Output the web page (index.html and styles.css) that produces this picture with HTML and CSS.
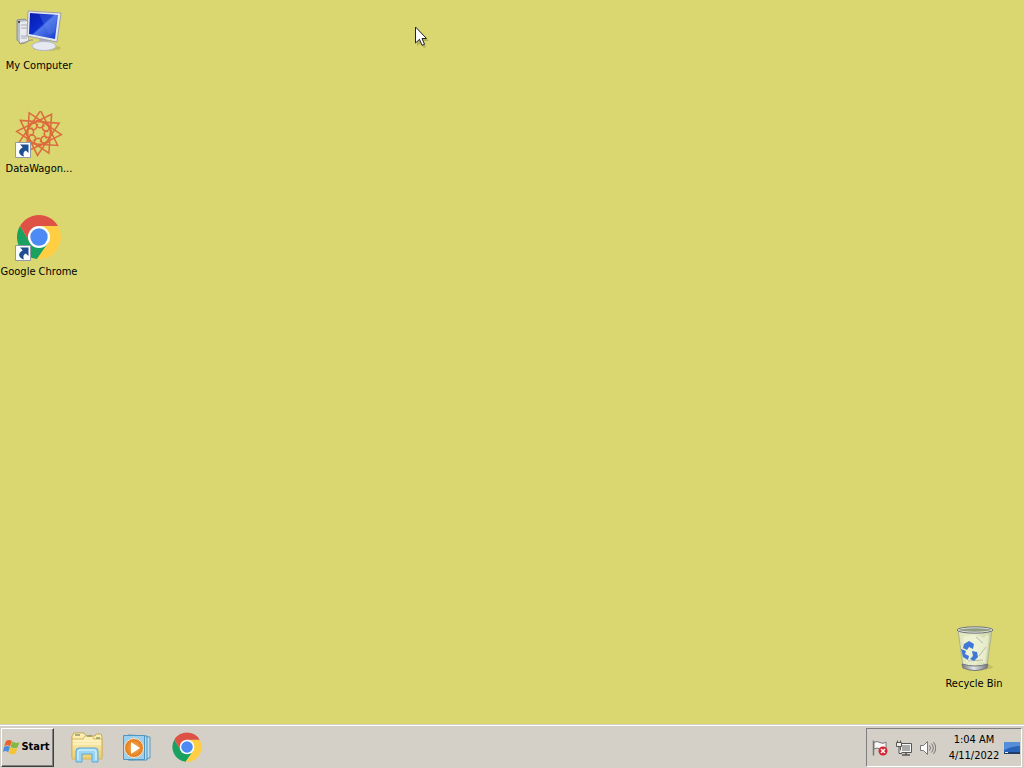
FILE: index.html
```html
<!DOCTYPE html>
<html lang="en">
<head>
<meta charset="utf-8">
<title>Desktop</title>
<link rel="stylesheet" href="styles.css">
</head>
<body>
<svg class="defs" aria-hidden="true">
  <defs>
    <linearGradient id="screen" x1="0" y1="0" x2="1" y2="1"><stop offset="0" stop-color="#0618a8"/><stop offset=".45" stop-color="#0c2ed0"/><stop offset=".5" stop-color="#4f78e8"/><stop offset="1" stop-color="#1238cf"/></linearGradient>
    <linearGradient id="metal" x1="0" y1="0" x2="1" y2="0"><stop offset="0" stop-color="#77797d"/><stop offset=".45" stop-color="#e4e6e8"/><stop offset="1" stop-color="#6e7378"/></linearGradient>
    <linearGradient id="folder" x1="0" y1="0" x2="0" y2="1"><stop offset="0" stop-color="#fff3bd"/><stop offset="1" stop-color="#eccd6c"/></linearGradient>
    <radialGradient id="orange"><stop offset="0" stop-color="#ffb25c"/><stop offset="1" stop-color="#e07818"/></radialGradient>
    <linearGradient id="glass" x1="0" y1="0" x2="1" y2="0"><stop offset="0" stop-color="#dfe5be"/><stop offset=".5" stop-color="#e8edc8"/><stop offset="1" stop-color="#c7cda0"/></linearGradient>
    <symbol id="chrome" viewBox="0 0 48 48">
      <path fill="#1aa15f" d="M5 13A22 22 0 0 0 22 46L33.5 29.5 24 34 14.5 28.5z"/>
      <path fill="#ffce43" d="M43 13A22 22 0 0 1 22 46L33.5 29.5V18.5L24 13z"/>
      <path fill="#de5246" d="M5 13 14.5 28.5 24 13H43A22 22 0 0 0 5 13z"/>
      <circle cx="24" cy="24" r="11" fill="#fff"/><circle cx="24" cy="24" r="8.7" fill="#4c8bf5"/>
    </symbol>
    <symbol id="shortcut" viewBox="0 0 16 16">
      <path d="M.5.5h15v15H.5z" fill="#fff" stroke="#8f9aa5"/>
      <path d="M5 2.5h8.500V11l-2.700-2.600C8.500 9.500 7.800 11.500 9 14.500 3 12.500 2.500 8.500 7.700 5.200z" fill="#1d4f91"/>
    </symbol>
    <path id="triangle" d="M0-22.500 19.500 11.200H-19.500z"/>
    <path id="curl" d="M-3-12C2-15 7-9 3-6 0-4-4-7-1-9"/>
  </defs>
</svg>
<main class="desktop">
  <nav class="icons" aria-label="Desktop icons">
    <button class="shortcut" type="button">
      <svg class="icon" viewBox="0 0 48 48" aria-hidden="true">
        <ellipse cx="32" cy="40" rx="14" ry="3" fill="#b7b35c" opacity=".7"/>
        <path d="M2 12 10 11 13 14V33L5 35 2 32z" fill="#b9bdc6" stroke="#8d9099"/>
        <path d="M5 14 13 13V33L5 35z" fill="#e8eaee"/>
        <path d="M6 17h6M6 20h6M6 28h6M6 30h6" stroke="#a7abb2"/><circle cx="4" cy="14" r="1" fill="#262a32"/>
        <path d="M4 35c5 3 9-4 14-3" stroke="#8a8c96" fill="none"/>
        <path d="M25 29 33 30 35 38H23z" fill="#a9adb8"/>
        <ellipse cx="29" cy="38" rx="12" ry="4.500" fill="#e7e9f2" stroke="#b5b8c5"/>
        <path d="M13 3 46 5 42 34 12 28z" fill="#e5e7f0" stroke="#9da1ae"/>
        <path d="M15 5 43 7 40 31 14 26z" fill="url(#screen)"/>
        <path d="M24 6 42 7 40 24 34 27z" fill="#6688ec" opacity=".3"/>
      </svg>
      <span class="label">My Computer</span>
    </button>
    <button class="shortcut" type="button">
      <svg class="icon" viewBox="0 0 48 48" aria-hidden="true">
        <g transform="translate(24 22)" fill="none" stroke="#dc6b3e" stroke-width="1.500">
          <g transform="rotate(4)"><use href="#triangle"/><use href="#triangle" transform="rotate(30)"/><use href="#triangle" transform="rotate(60)"/><use href="#triangle" transform="rotate(90)"/></g>
          <use href="#curl"/><use href="#curl" transform="rotate(45)"/><use href="#curl" transform="rotate(90)"/><use href="#curl" transform="rotate(135)"/><use href="#curl" transform="rotate(180)"/><use href="#curl" transform="rotate(225)"/><use href="#curl" transform="rotate(270)"/><use href="#curl" transform="rotate(315)"/>
        </g>
        <use href="#shortcut" x="0" y="31" width="16" height="16"/>
      </svg>
      <span class="label">DataWagon...</span>
    </button>
    <button class="shortcut" type="button">
      <svg class="icon" viewBox="0 0 48 48" aria-hidden="true">
        <use href="#chrome" x="0" y="-1" width="48" height="48"/>
        <use href="#shortcut" x="0" y="31" width="16" height="16"/>
      </svg>
      <span class="label">Google Chrome</span>
    </button>
  </nav>
  <button class="shortcut bin" type="button">
    <svg class="icon" viewBox="-1 1 48 48" aria-hidden="true">
      <ellipse cx="28" cy="42" rx="14" ry="3" fill="#b3af5c" opacity=".6"/>
      <path d="M7 5 12 41Q24 47 36 41L41 5z" fill="url(#glass)" stroke="#adb38c"/>
      <path d="M12 12 22 10 33 13 36 9 38 12 34 38 27 36 16 38z" fill="#f4f6dc" opacity=".6"/>
      <path d="m28 31 7-9M25 12l7 6M17 36l15-1" stroke="#b8bea4" fill="none"/>
      <g fill="#3f78d8"><path d="m13 19 5-3 5 3-1 5-4-2-2 3-4-2z"/><path d="m10 24 5 2-1 3 4 2-1 4-5-3z"/><path d="m21 26 5 1 1 5-4 4-4-2 3-3z"/></g>
      <path d="M11 39Q24 43 37 39L36 43Q24 48 12 43z" fill="url(#metal)" stroke="#73787b"/>
      <ellipse cx="24" cy="5" rx="17" ry="2.500" fill="#8f9c80" stroke="#dfe2df" stroke-width="1.500"/>
      <ellipse cx="24" cy="5" rx="18" ry="3.200" fill="none" stroke="#6c7276"/>
    </svg>
    <span class="label">Recycle Bin</span>
  </button>
  <svg class="pointer" viewBox="0 0 14 21" aria-hidden="true"><path d="M3 4v16l4-3 3 5 2-1-2-6h5z" fill="#8f8c43" opacity=".5"/><path d="M1.500 1v16l4-3.700 2.500 6 2.500-1L8 12.500h4.500z" fill="#fff" stroke="#222"/></svg>
</main>
<footer class="taskbar">
  <button class="start" type="button">
    <svg class="flag" viewBox="0 0 17 16" aria-hidden="true">
      <path d="M3 2Q6 0 9 2L7 7.500Q4 5 1 7.500z" fill="#e8622c"/><path d="M9.500 2.500Q13 5 16.500 3L14.500 8.500Q11 10 7.500 8z" fill="#83b941"/>
      <path d="M1 8Q4 6 7 8L5 13.500Q3 11 0 13z" fill="#4a8fd8"/><path d="M7.500 8.500Q11 10.500 14.500 9L12.500 14.500Q9 16 5.500 14z" fill="#f7c331"/>
    </svg>
    <span>Start</span>
  </button>
  <nav class="launch" aria-label="Quick launch">
    <button class="app" type="button" aria-label="File Explorer">
      <svg class="app-icon" viewBox="0 0 32 32" aria-hidden="true">
        <path d="M1 5 3 2h10l2 3h9l1-2h5l1 3v20H1z" fill="url(#folder)" stroke="#c7a955"/>
        <path d="M1 8h11l2-3h7l2 3h8v20H1z" fill="url(#folder)" stroke="#d3b662"/>
        <path d="M4 4h5M16 5h5M25 7h4" stroke="#8d9a68" stroke-width="1.500"/>
        <path d="M2 13h28M2 10h28" stroke="#fff8d5"/>
        <path d="M5 31V20q0-3 3-3h16q3 0 3 3v11h-6v-8H11v8z" fill="#9bd5f2" stroke="#5fa9d5"/>
        <path d="M7 29v-8q0-2 2-2h14q2 0 2 2v8" fill="none" stroke="#e4f8ff"/>
      </svg>
    </button>
    <button class="app" type="button" aria-label="Media Player">
      <svg class="app-icon" viewBox="0 0 32 32" aria-hidden="true">
        <path d="M10 5 29 6v21l-19 2z" fill="#c5dfec" stroke="#5599c1"/>
        <path d="M7 4 26 5v24H7z" fill="#b6dbef" stroke="#4b91bc"/>
        <path d="M2.500 4.500h21v24h-21z" fill="#9fd0eb" stroke="#4f97c2"/>
        <circle cx="13" cy="17" r="9.500" fill="url(#orange)" stroke="#fbe6ce"/>
        <path d="m10 11 9 6-9 6z" fill="#fff"/>
      </svg>
    </button>
    <button class="app" type="button" aria-label="Google Chrome">
      <svg class="app-icon" aria-hidden="true"><use href="#chrome" width="32" height="32"/></svg>
    </button>
  </nav>
  <section class="tray" aria-label="Notification area">
    <button class="tray-button" type="button" aria-label="Action Center">
      <svg class="tray-icon" viewBox="0 0 16 16" aria-hidden="true"><path d="M1.500.5v15" stroke="#777" stroke-width="1.500"/><path d="M2 2.500q3-2 6 0t6-.5v7q-3 2-6 0t-6 0z" fill="#f8f8f8" stroke="#777"/><circle cx="11" cy="11" r="4.500" fill="#d32434"/><path d="m9 9 4 4m0-4-4 4" stroke="#fff" stroke-width="1.500"/></svg>
    </button>
    <button class="tray-button" type="button" aria-label="Network">
      <svg class="tray-icon" viewBox="0 0 16 16" aria-hidden="true"><path d="M4.500 3.500h11v9h-11z" fill="#f5f5f5" stroke="#555"/><path d="M6 5h8v6H6z" fill="#aaa"/><path d="M6 15h8M10 12.500V15" stroke="#555" stroke-width="1.500"/><path d="M.5 2.500h5v4h-5zM1.500.5v2M4.500.5v2M3 7v6.500h3" fill="#eee" stroke="#555"/></svg>
    </button>
    <button class="tray-button" type="button" aria-label="Volume">
      <svg class="tray-icon" viewBox="0 0 16 16" aria-hidden="true"><path d="M.5 5.500h3l4-4v13l-4-4h-3z" fill="#fafafa" stroke="#777"/><path d="M9.500 5.500q2 2.500 0 5M11.500 3.500q3.500 4.500 0 9M13.500 2q4.500 6 0 12" fill="none" stroke="#777"/></svg>
    </button>
    <time class="clock" datetime="2022-04-11T01:04"><span>1:04 AM</span><span>4/11/2022</span></time>
    <button class="show-desktop" type="button" aria-label="Show desktop">
      <svg class="screen-icon" viewBox="0 0 16 14" aria-hidden="true"><path d="M0 1h16v11H0z" fill="#2864b8"/><path d="M0 1h16v4Q8 5 0 9z" fill="#568fd9"/><path d="M0 11h16v2H0z" fill="#203d68"/><path d="M1 11h3v1H1z" fill="#e8eef8"/></svg>
    </button>
  </section>
</footer>
</body>
</html>
```
FILE: styles.css
```css
* { box-sizing: border-box; }
body {
  margin: 0;
  min-height: 100vh;
  display: flex;
  flex-direction: column;
  background: #dad770;
  color: #000;
  font: 11px/16px "DejaVu Sans Condensed", Tahoma, "DejaVu Sans", sans-serif;
}
button {
  font: inherit;
  color: inherit;
  background: none;
  border: 0;
  padding: 0;
}
svg { display: block; flex: none; }
.defs { position: absolute; width: 0; height: 0; }
.desktop {
  position: relative;
  flex: 1;
  display: flex;
  justify-content: space-between;
  padding: 8px 12px 32px 1px;
}
.icons { display: flex; flex-direction: column; gap: 37px; }
.shortcut {
  width: 76px;
  display: flex;
  flex-direction: column;
  align-items: center;
  gap: 2px;
}
.bin { align-self: flex-end; }
.icon { width: 48px; height: 48px; }
.label { white-space: nowrap; }
.pointer { position: absolute; left: 414px; top: 26px; width: 14px; height: 21px; overflow: visible; }
.taskbar {
  display: flex;
  align-items: center;
  height: 44px;
  padding: 2px 2px 0 1px;
  background: #d4d0c8;
  border-top: 1px solid #d4d0c8;
  box-shadow: inset 0 1px #fff;
}
.start {
  display: flex;
  align-items: center;
  justify-content: center;
  gap: 1px;
  width: 53px;
  height: 39px;
  padding: 0 2px 2px 0;
  border: 1px solid;
  border-color: #fff #404040 #404040 #fff;
  box-shadow: inset -1px -1px #808080;
  font-weight: bold;
}
.flag { width: 17px; height: 16px; }
.launch { display: flex; margin-left: 8px; }
.app { width: 50px; height: 39px; padding-bottom: 2px; display: flex; align-items: center; justify-content: center; }
.app-icon { width: 32px; height: 32px; }
.tray {
  display: flex;
  align-items: center;
  height: 39px;
  margin-left: auto;
  padding: 0 1px 0 5px;
  border: 1px solid;
  border-color: #808080 #fff #fff #808080;
}
.tray-button { width: 24px; display: flex; }
.tray-icon { width: 16px; height: 16px; }
.clock { display: flex; flex-direction: column; width: 60px; text-align: center; }
.screen-icon { width: 16px; height: 14px; }
```
